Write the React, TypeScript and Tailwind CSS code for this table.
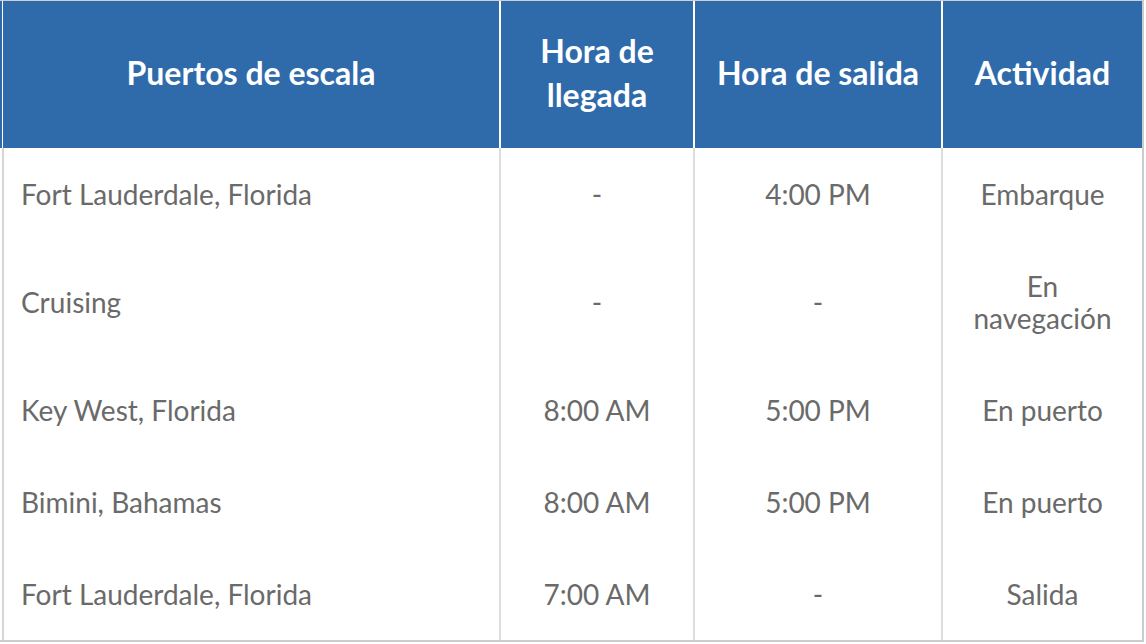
import React from "react";

type Row = {
  port: string;
  arrival: string;
  departure: string;
  activity: React.ReactNode;
};

const rows: Row[] = [
  { port: "Fort Lauderdale, Florida", arrival: "-", departure: "4:00 PM", activity: "Embarque" },
  {
    port: "Cruising",
    arrival: "-",
    departure: "-",
    activity: (
      <>
        En
        <br />
        navegacio&#769;n
      </>
    ),
  },
  { port: "Key West, Florida", arrival: "8:00 AM", departure: "5:00 PM", activity: "En puerto" },
  { port: "Bimini, Bahamas", arrival: "8:00 AM", departure: "5:00 PM", activity: "En puerto" },
  { port: "Fort Lauderdale, Florida", arrival: "7:00 AM", departure: "-", activity: "Salida" },
];

export default function App() {
  return (
    <div className="w-[1146px] h-[644px] bg-white font-['Lato','Liberation_Sans',sans-serif]">
      <div className="w-[1144px] border-t border-t-[#cfcfcf] border-r-2 border-r-[#cccccc] border-b-2 border-b-[#cccccc]">
        {/* Header */}
        <div className="flex h-[147px] text-white font-bold text-[32px] leading-[44px]">
          <div className="w-[2px] bg-[#2f6bab]" />
          <div className="w-px bg-white" />
          <div className="w-[498px] border-r-2 border-white bg-[#2f6bab] pb-[4px] flex items-center justify-center">
            Puertos de escala
          </div>
          <div className="w-[194px] border-r-2 border-white bg-[#2f6bab] pb-[4px] flex items-center justify-center text-center">
            Hora de
            <br />
            llegada
          </div>
          <div className="w-[248px] border-r-2 border-white bg-[#2f6bab] pb-[4px] flex items-center justify-center">
            Hora de salida
          </div>
          <div className="w-[199px] bg-[#2f6bab] pb-[4px] flex items-center justify-center">Actividad</div>
        </div>

        {/* Body */}
        {rows.map((r, i) => (
          <div key={i} className="flex text-[28px] leading-[32px] text-[#6a6a6a]">
            <div className="w-[2px]" />
            <div className="w-[2px] bg-[#d6d6d6]" />
            <div className="w-[497px] border-r-2 border-[#dddddd] py-[30px] pl-[17px] flex items-center">
              {r.port}
            </div>
            <div className="w-[194px] border-r-2 border-[#dddddd] py-[30px] flex items-center justify-center">
              {r.arrival}
            </div>
            <div className="w-[248px] border-r-2 border-[#dddddd] py-[30px] flex items-center justify-center">
              {r.departure}
            </div>
            <div className="w-[199px] py-[30px] text-center">{r.activity}</div>
          </div>
        ))}
      </div>
    </div>
  );
}
